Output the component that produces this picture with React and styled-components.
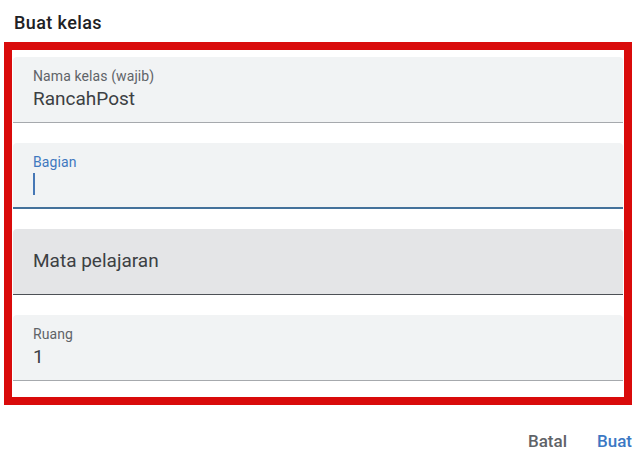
import React from 'react'
import styled, { createGlobalStyle } from 'styled-components'

const GlobalStyle = createGlobalStyle`
  html, body {
    margin: 0;
    padding: 0;
    background: #fff;
  }
  body {
    font-family: Roboto, "Liberation Sans", Arial, sans-serif;
    -webkit-font-smoothing: antialiased;
  }
`

const Dialog = styled.div`
  width: 640px;
  height: 460px;
  box-sizing: border-box;
  padding: 13px 8px 0 4px;
  display: flex;
  flex-direction: column;
`

const Title = styled.h2`
  margin: 0 0 9px 10px;
  font-size: 18px;
  line-height: 20px;
  font-weight: 500;
  letter-spacing: 0.4px;
  color: #202124;
`

const Highlight = styled.div`
  border: 8px solid #d90b0b;
  padding: 7px 1px 16px 1px;
  display: flex;
  flex-direction: column;
  gap: 20px;
`

const Field = styled.div`
  height: 66px;
  box-sizing: border-box;
  padding: 11px 20px 0;
  background: ${p => (p.$hover ? '#e4e5e7' : '#f1f3f4')};
  border-radius: 4px 4px 0 0;
  border-bottom: ${p => (p.$focused ? '2px solid #44719a' : p.$hover ? '1px solid #4d5156' : '1px solid #a6a9ad')};
  display: flex;
  flex-direction: column;
  justify-content: ${p => (p.$empty ? 'center' : 'flex-start')};
  ${p => p.$empty && 'padding-top: 0; padding-bottom: 1px;'}
`

const Label = styled.span`
  font-size: 14px;
  line-height: 16px;
  letter-spacing: 0.1px;
  color: ${p => (p.$active ? '#3f78bf' : '#5f6368')};
`

const Value = styled.div`
  margin-top: 3px;
  font-size: 19px;
  line-height: 24px;
  height: 24px;
  color: #3c4043;
`

const Placeholder = styled.span`
  font-size: 19px;
  line-height: 24px;
  color: #3c4043;
`

const Caret = styled.span`
  display: block;
  width: 1.5px;
  height: 22px;
  background: #4677b5;
`

const Footer = styled.div`
  margin-top: 26px;
  display: flex;
  justify-content: flex-end;
  gap: 30px;
`

const TextButton = styled.button`
  border: none;
  background: none;
  padding: 0;
  font-family: inherit;
  font-size: 17px;
  line-height: 20px;
  font-weight: 500;
  color: ${p => (p.$primary ? '#3b78c4' : '#5f6368')};
  cursor: pointer;
`

export default function App() {
  return (
    <>
      <GlobalStyle />
      <Dialog>
        <Title>Buat kelas</Title>
        <Highlight>
          <Field>
            <Label>Nama kelas (wajib)</Label>
            <Value>RancahPost</Value>
          </Field>
          <Field $focused>
            <Label $active>Bagian</Label>
            <Value>
              <Caret />
            </Value>
          </Field>
          <Field $hover $empty>
            <Placeholder>Mata pelajaran</Placeholder>
          </Field>
          <Field>
            <Label>Ruang</Label>
            <Value>1</Value>
          </Field>
        </Highlight>
        <Footer>
          <TextButton>Batal</TextButton>
          <TextButton $primary>Buat</TextButton>
        </Footer>
      </Dialog>
    </>
  )
}
